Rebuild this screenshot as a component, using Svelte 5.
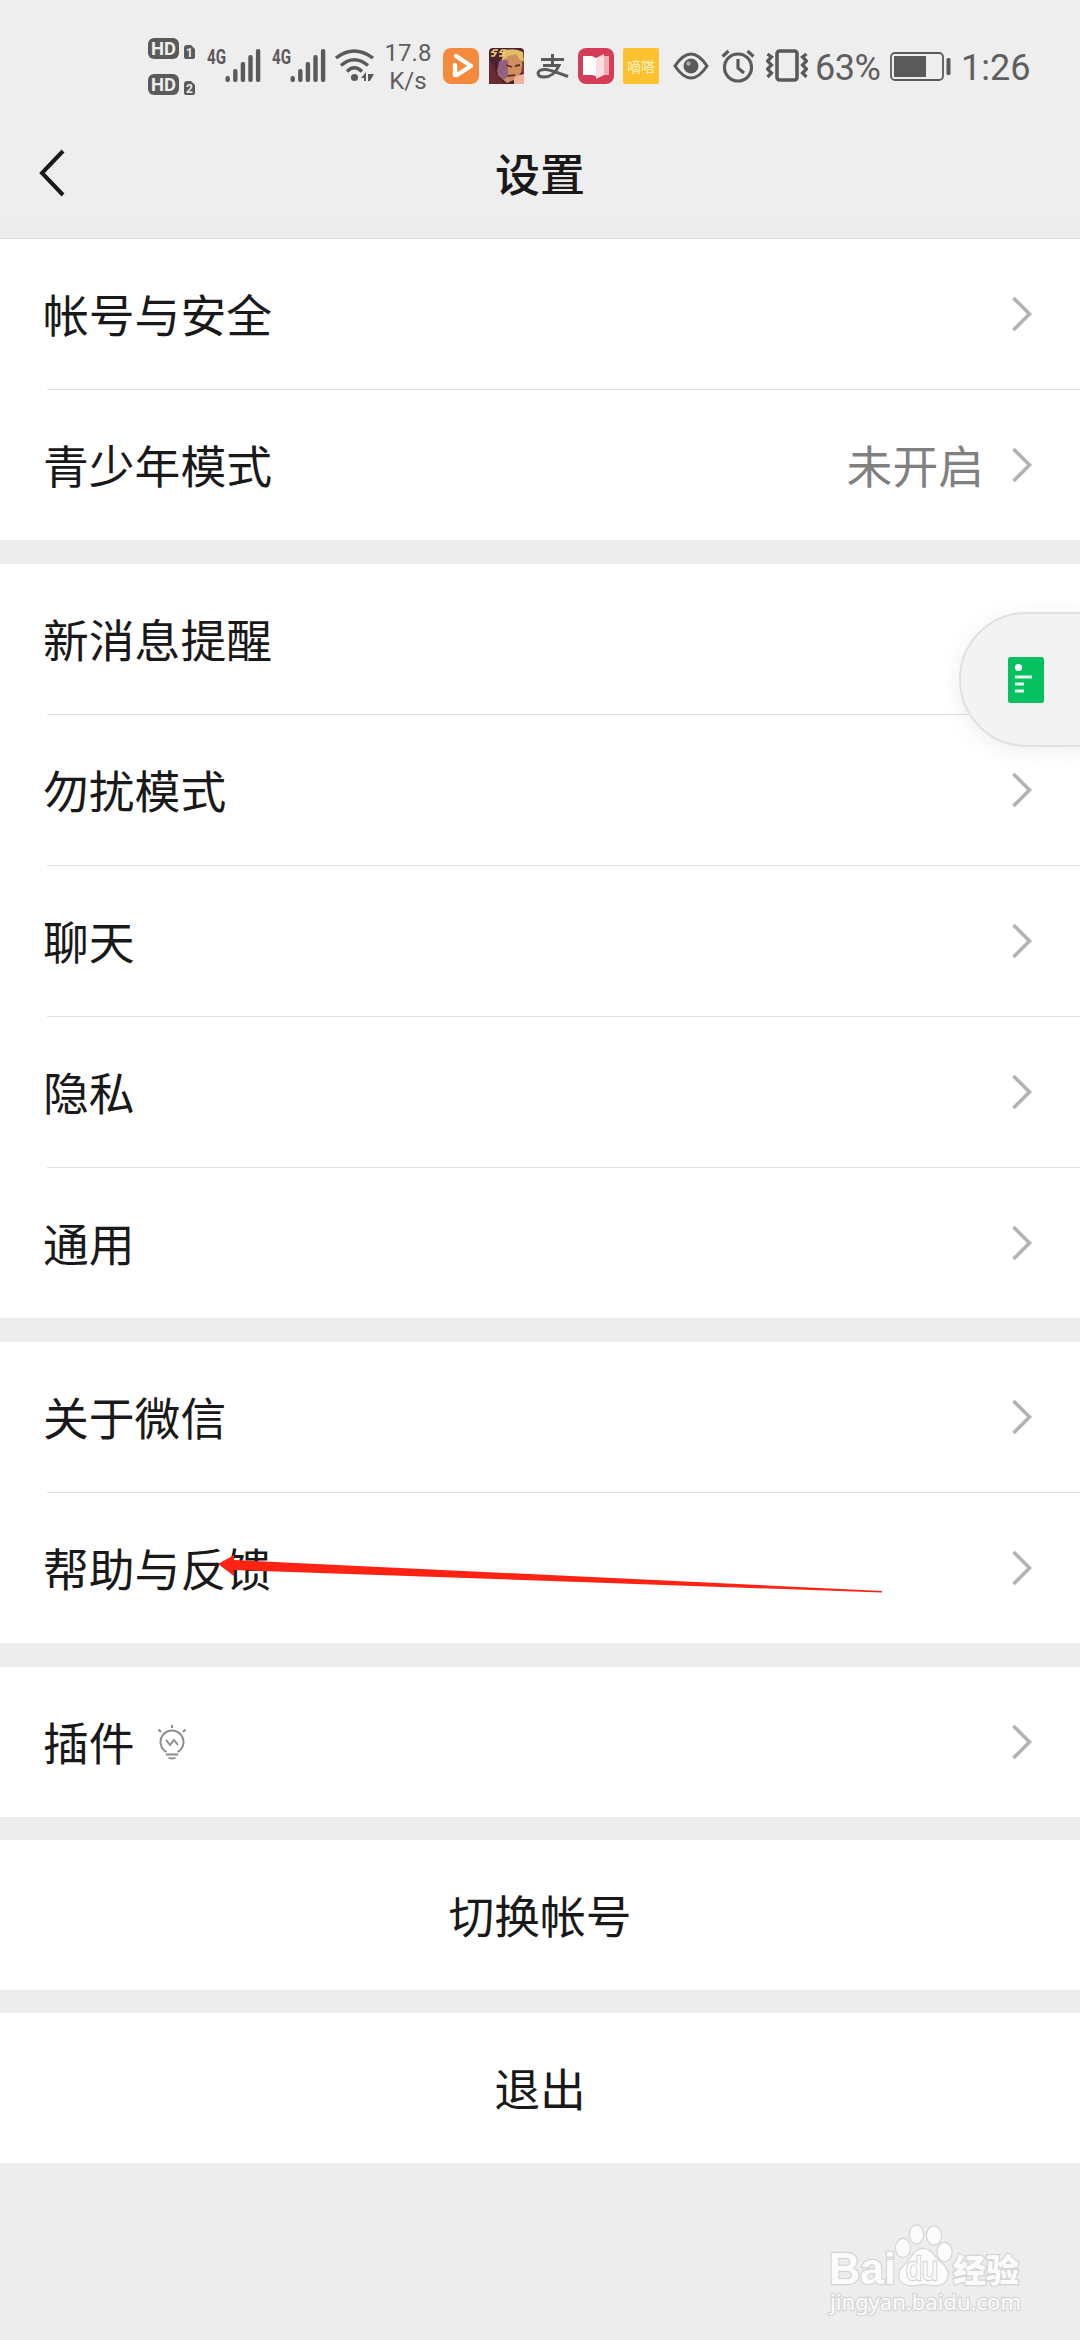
<script>
  const groups = [
    [{ t: '帐号与安全' }, { t: '青少年模式', v: '未开启' }],
    [{ t: '新消息提醒' }, { t: '勿扰模式' }, { t: '聊天' }, { t: '隐私' }, { t: '通用' }],
    [{ t: '关于微信' }, { t: '帮助与反馈' }],
    [{ t: '插件', bulb: true }],
    [{ t: '切换帐号', center: true }],
    [{ t: '退出', center: true }],
  ];
  const bars = [6, 13, 20, 27, 33];
</script>

<div class="screen">
  <header class="status">
    <svg class="hd" width="50" height="60" viewBox="0 0 50 60">
      {#each [0, 36] as y, i}
        <rect x="0" y={y + 1} width="31" height="21" rx="6" fill="#5a5a5a" />
        <text x="15.5" y={y + 18} class="hdt" text-anchor="middle" textLength="25" lengthAdjust="spacingAndGlyphs">HD</text>
        <path d="M36 {y + 11}q0-3 3-3h4l4 4v8q0 2-2 2h-7q-2 0-2-2z" fill="#5a5a5a" />
        <text x="41.5" y={y + 20} class="sim" text-anchor="middle">{i + 1}</text>
      {/each}
    </svg>
    {#each [0, 1] as n}
      <svg class="sig sig{n}" width="54" height="42" viewBox="0 -6 54 42">
        <text x="0" y="16" class="g4" textLength="19" lengthAdjust="spacingAndGlyphs">4G</text>
        {#each bars as h, i}
          <rect x={18.5 + i * 7.6} y={34 - h} width="4.4" height={h} rx="2" fill="#5a5a5a" />
        {/each}
      </svg>
    {/each}
    <svg class="wifi" width="40" height="34" viewBox="0 0 40 34" fill="none" stroke="#5a5a5a" stroke-width="3.4">
      <path d="M1 9Q19-5 38 9M6 16.500Q19 5 33 16.500M12 22.500Q19 15 27 22.500" />
      <circle cx="19.500" cy="28.500" r="3.600" fill="#5a5a5a" stroke="none" />
      <path d="M26 29l5-6v9h-2v-3zM33 25h6l-4 7h-2z" fill="#5a5a5a" stroke="none" />
    </svg>
    <div class="speed"><span>17.8</span><span>K/s</span></div>
    <svg class="apps" width="216" height="36" viewBox="0 0 216 36">
      <rect width="36" height="36" rx="8" fill="#f58a3c" />
      <path d="M12 17v10M13 8l15 10-14 9" fill="none" stroke="#fff" stroke-width="4.4" stroke-linecap="round" stroke-linejoin="round" />
      <g transform="translate(46 0)">
        <rect width="35" height="36" rx="4" fill="#4b2230" />
        <path d="M14 9L27 3l6 9 1 10-7 9-9 4-9-8z" fill="#cf8f5e" />
        <path d="M13 11l6 2v16l-5 3-6-8 2-10z" fill="#94627d" />
        <path d="M14 3q11-4 20 1l1 10-4-2-4-6-8 2-6 5z" fill="#e5bd69" />
        <path d="M17 17l6 2m3-1l5-1M19 28l7-1" stroke="#64302b" stroke-width="1.800" />
        <path d="M0 12l5 6 3 9 7 9H0z" fill="#6a2c33" />
        <path d="M25 36v-6l5-3 5-1v10z" fill="#edb1a0" />
        <path d="M35 12l-3 11 3 3z" fill="#8c3b3c" />
        <path d="M9 2H5L3 4l4 1-2 3H2M17 2h-4l-2 2 4 1-2 3h-3" stroke="#f6d075" stroke-width="1.600" fill="none" />
      </g>
      <path d="M98 11.500h23M109.500 6v11.500M100 17.500h16Q111 29 101 29q-6 0-6-4 1-4 8-3.500 5 .5 22 7" fill="none" stroke="#5a5a5a" stroke-width="3" />
      <rect x="135" width="36" height="36" rx="8" fill="#d43d58" />
      <path d="M140 8h9l4 2v18l-4-1h-9z" fill="#fff" /><path d="M153 10l8-4v21l-8 4z" fill="#fbdde2" /><path d="M161 8h5v19h-5z" fill="#f3acb8" />
      <rect x="180" width="36" height="36" rx="2" fill="#fbc12f" />
      <text x="198" y="24" class="dida" text-anchor="middle">嘀嗒</text>
    </svg>
    <svg class="eye" width="36" height="28" viewBox="0 0 36 28">
      <path d="M2 14Q18-10 34 14Q18 38 2 14z" fill="none" stroke="#5a5a5a" stroke-width="3" />
      <circle cx="18" cy="14" r="7.5" fill="#5a5a5a" /><circle cx="15.5" cy="11.5" r="2.2" fill="#aaa" />
    </svg>
    <svg class="alarm" width="34" height="34" viewBox="0 0 34 34" fill="none" stroke="#5a5a5a" stroke-width="3.2">
      <circle cx="17" cy="18.5" r="13.5" /><path d="M17 10v9l6 5M1.5 7.5l6-5.5M26.500 2l6 5.500" />
    </svg>
    <svg class="vib" width="42" height="34" viewBox="0 0 42 34" fill="none" stroke="#5a5a5a">
      <rect x="11" y="2" width="20" height="29" rx="2.500" stroke-width="3.6" />
      <path d="M1.500 5l4 3-4 4 4 4-4 4 4 4-4 4M40.500 5l-4 3 4 4-4 4 4 4-4 4 4 4" stroke-width="3.200" />
    </svg>
    <span class="pct">63%</span>
    <svg class="bat" width="61" height="30" viewBox="0 0 61 30">
      <rect x="1" y="1" width="52" height="27" rx="4" fill="none" stroke="#5a5a5a" stroke-width="1.800" />
      <rect x="4" y="4" width="32" height="21" fill="#5a5a5a" /><rect x="56.500" y="6" width="4" height="17" rx="1.500" fill="#5a5a5a" />
    </svg>
    <span class="time">1:26</span>
  </header>

  <nav class="title">
    <svg class="back" width="30" height="50" viewBox="0 0 30 50"><path d="M25 3L4 25l21 22" fill="none" stroke="#191919" stroke-width="4" /></svg>
    <h1>设置</h1>
  </nav>

  <main>
    {#each groups as g}
      <section>
        {#each g as r}
          <div class="row" class:center={r.center}>
            <span class="label">{r.t}</span>
            {#if r.bulb}
              <svg class="bulb" width="30" height="36" viewBox="0 0 30 36" fill="none" stroke="#8c8c8c" stroke-width="2">
                <path d="M9.500 28A11.500 11.500 0 1 1 20.500 28M9 30.500h12M11.500 33.500q3.500 2 7 0M15 1v3M1.500 5.500l2.500 2.500M28.500 5.500L26 8M9 16l4 5 4-5 4 5" />
              </svg>
            {/if}
            {#if r.v}<span class="value">{r.v}</span>{/if}
            {#if !r.center}
              <svg class="chev" width="22" height="36" viewBox="0 0 22 36"><path d="M2.500 2L18.500 18l-16 16" fill="none" stroke="#b2b2b2" stroke-width="3.600" /></svg>
            {/if}
          </div>
        {/each}
      </section>
    {/each}
  </main>

  <div class="float">
    <svg width="36" height="46" viewBox="0 0 36 46">
      <rect width="36" height="46" rx="2.500" fill="#07c160" /><circle cx="10.500" cy="10.500" r="3.500" fill="#fff" />
      <path d="M7 20h17M7 27h9M7 34h9" stroke="#e4fbee" stroke-width="3" />
    </svg>
  </div>

  <svg class="arrow" width="670" height="40" viewBox="0 0 670 40">
    <path d="M0 13L16 4v5L664 40v1.500L16 19v6z" fill="#ff2314" />
  </svg>

  <svg class="mark" width="200" height="100" viewBox="0 0 200 100">
    <g fill="#fbfbfb" stroke="#d5d5d5" stroke-width="2.400" paint-order="stroke">
      <text x="0" y="63" class="bai" textLength="67" lengthAdjust="spacingAndGlyphs">Bai</text>
      <ellipse cx="74" cy="27" rx="7" ry="9" /><ellipse cx="87.500" cy="13.500" rx="6.500" ry="9" />
      <ellipse cx="105" cy="14.500" rx="7" ry="9" /><ellipse cx="115.500" cy="31" rx="7" ry="9" />
      <path d="M94 28c9 0 11 9 17 13 14 11 7 25-7 23q-9-2-18 0c-15 2-21-10-10-20 6-5 9-16 18-16z" />
      <text x="77" y="59" class="du" textLength="32" lengthAdjust="spacingAndGlyphs">du</text>
      <text x="124" y="61" class="jy" textLength="66" lengthAdjust="spacingAndGlyphs">经验</text>
      <text x="1" y="89" class="url" textLength="191" lengthAdjust="spacingAndGlyphs">jingyan.baidu.com</text>
    </g>
  </svg>
</div>

<style>
  :global(body) { margin: 0; background: #ededed; }
  .screen { position: relative; width: 1080px; height: 2340px; overflow: hidden; background: #ededed; font-family: Roboto, "Noto Sans CJK SC", sans-serif; color: #191919; }
  svg { display: block; flex: none; }
  .status { display: flex; align-items: flex-start; height: 132px; box-sizing: border-box; padding-left: 148px; color: #5f5f5f; background: #eee; }
  .hd { margin-top: 37px; }
  .hdt { font: 700 19px Roboto, sans-serif; fill: #eee; }
  .sim { font: 700 12px Roboto, sans-serif; fill: #eee; }
  .g4 { font: 700 20px Roboto, sans-serif; fill: #5a5a5a; }
  .sig { margin: 42px 0 0 9px; }
  .sig1 { margin-left: 11px; }
  .wifi { margin: 49px 0 0 9px; }
  .speed { display: flex; flex-direction: column; align-items: center; width: 46px; margin: 39px 0 0 10px; font-size: 24px; line-height: 28px; }
  .apps { margin: 48px 0 0 12px; }
  .dida { font: 400 14px "Noto Sans CJK SC", sans-serif; fill: #fff3c8; }
  .eye { margin: 52px 0 0 14px; }
  .alarm { margin: 49px 0 0 12px; }
  .vib { margin: 49px 0 0 11px; }
  .pct { width: 66px; margin: 47px 0 0 7px; font-size: 36px; line-height: 42px; letter-spacing: -0.5px; }
  .bat { margin: 52px 0 0 9px; }
  .time { margin: 47px 0 0 10px; font-size: 36px; line-height: 42px; }
  .title { display: grid; grid-template-columns: 80px 1fr 80px; height: 107px; box-sizing: border-box; border-bottom: 1px solid #dcdcdc; background: linear-gradient(#eee 80%, #ebebeb); }
  .back { margin: 16px 0 0 38px; }
  h1 { margin: 13px 0 0; text-align: center; font-size: 45px; line-height: 64px; font-weight: 500; }
  main { display: flex; flex-direction: column; gap: 24px; }
  section { background: #fff; }
  section:nth-child(n + 5) { margin-top: -1px; }
  .row { display: flex; align-items: center; height: 150px; padding: 0 47px 0 43px; font-size: 45.800px; }
  .row + .row { border-top: 1px solid transparent; background: linear-gradient(#e0e0e0, #e0e0e0) 47px 0 / 100% 1px no-repeat border-box; }
  .label { line-height: 66px; padding-top: 7px; }
  .center { justify-content: center; padding: 0; }
  .bulb { margin-left: 22px; }
  .value { margin-left: auto; margin-right: 27px; padding-top: 7px; line-height: 66px; color: #808080; }
  .chev { margin-left: auto; }
  .value + .chev { margin-left: 0; }
  .float { position: absolute; left: 959px; top: 612px; width: 180px; height: 131px; border: 2px solid #e0e0e0; border-radius: 68px; background: #f3f3f3; box-shadow: 0 4px 24px rgba(0, 0, 0, 0.07); }
  .float svg { margin: 43px 0 0 47px; }
  .arrow { position: absolute; left: 218px; top: 1551px; overflow: visible; }
  .mark { position: absolute; left: 829px; top: 2221px; overflow: visible; }
  .bai { font: 700 44px "Liberation Sans", sans-serif; }
  .du { font: 400 33px "Liberation Sans", sans-serif; }
  .jy { font: 900 32px "Noto Sans CJK SC", sans-serif; }
  .url { font: 400 22px "Noto Sans", sans-serif; }
</style>
